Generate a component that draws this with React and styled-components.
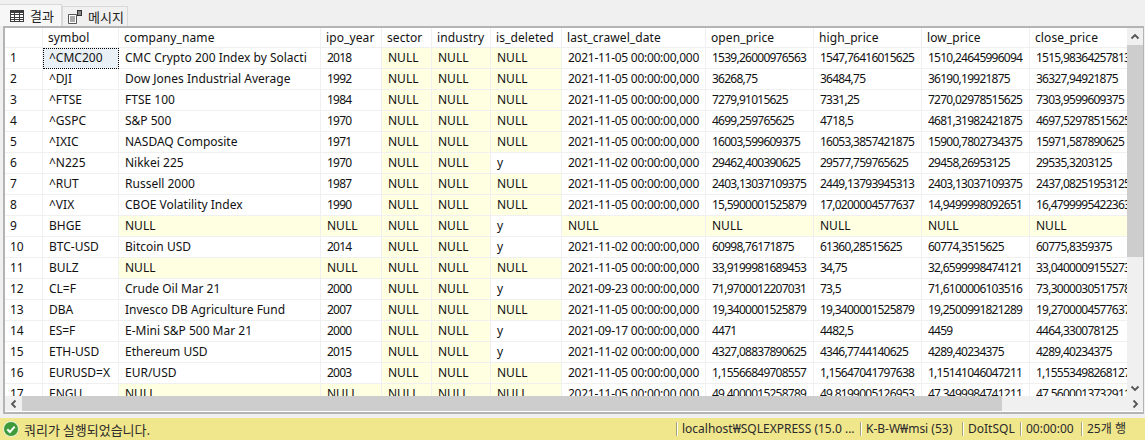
import React from "react";
import styled, { createGlobalStyle } from "styled-components";

const GlobalStyle = createGlobalStyle`
  html, body {
    margin: 0;
    padding: 0;
    background: #f0f0f0;
  }
  body {
    font-family: "Noto Sans", "Noto Sans CJK KR", sans-serif;
    font-size: 12px;
    color: #111;
  }
`;

const Page = styled.div`
  width: 1145px;
  height: 440px;
  display: flex;
  flex-direction: column;
  overflow: hidden;
`;

const TabBar = styled.div`
  height: 26px;
  flex: none;
  display: flex;
  align-items: flex-end;
  box-sizing: border-box;
`;

const Tab = styled.div`
  height: ${(p) => (p.$active ? 22 : 20)}px;
  width: ${(p) => p.$width}px;
  box-sizing: border-box;
  display: flex;
  align-items: center;
  gap: 5px;
  padding-left: ${(p) => (p.$active ? 9 : 4)}px;
  background: ${(p) => (p.$active ? "#f7f7f7" : "#f0f0f0")};
  border: 1px solid #d9d9d9;
  border-left: ${(p) => (p.$active ? "none" : "1px solid #d9d9d9")};
  border-bottom: none;
  font-family: "Noto Sans CJK KR", sans-serif;
  font-size: 13px;
  color: #222;
`;

const Frame = styled.div`
  margin: 0 1px 0 3px;
  height: 388px;
  flex: none;
  box-sizing: border-box;
  border: 2px solid #b4b4b4;
  border-right-width: 1px;
  padding-bottom: 1px;
  background: #fff;
  display: flex;
  flex-direction: column;
`;

const GridRow = styled.div`
  flex: 1;
  min-height: 0;
  display: flex;
`;

const GridClip = styled.div`
  flex: 1;
  min-width: 0;
  overflow: hidden;
`;

const Table = styled.table`
  table-layout: fixed;
  border-collapse: separate;
  border-spacing: 0;
  width: 1133px;
`;

const Head = styled.th`
  height: 20px;
  padding: 0 0 0 5px;
  box-sizing: border-box;
  text-align: left;
  font-weight: 400;
  white-space: nowrap;
  overflow: hidden;
  border-right: 1px solid #f0f0f0;
  border-bottom: 1px solid #f0f0f0;
  letter-spacing: 0.1px;
`;

const spacing = { text: "0", date: "-0.27px", price: "-0.75px" };

const Cell = styled.td`
  height: 21px;
  padding: 0 0 2px ${(p) => (p.$rowHead ? 5 : 6)}px;
  box-sizing: border-box;
  white-space: nowrap;
  overflow: hidden;
  position: relative;
  background: ${(p) => (p.$selected ? "#e9f0f6" : p.$null ? "#ffffe1" : "#ffffff")};
  border-right: 1px solid #f0f0f0;
  border-bottom: 1px solid #f0f0f0;
  outline: ${(p) => (p.$selected ? "1px dotted #000" : "none")};
  outline-offset: -1px;
  letter-spacing: ${(p) => spacing[p.$kind || "text"]};
`;

const VScroll = styled.div`
  width: 16px;
  flex: none;
  background: #f0f0f0;
  display: flex;
  flex-direction: column;
`;

const HScroll = styled.div`
  height: 15px;
  flex: none;
  background: #f0f0f0;
  display: flex;
`;

const Arrow = styled.div`
  width: ${(p) => p.$size}px;
  height: ${(p) => p.$high}px;
  flex: none;
  display: flex;
  align-items: center;
  justify-content: center;
`;

const VThumb = styled.div`
  height: 212px;
  flex: none;
  background: #cdcdcd;
`;

const Spacer = styled.div`
  flex: 1;
`;

const HThumb = styled.div`
  width: 980px;
  flex: none;
  background: #cdcdcd;
`;

const StatusBar = styled.div`
  margin-top: 4px;
  flex: 1;
  background: #f0e68c;
  display: flex;
  align-items: center;
  padding-left: 3px;
  font-size: 12px;
  color: #2a2a2a;
`;

const StatusMessage = styled.div`
  flex: 1;
  display: flex;
  align-items: center;
  gap: 5px;
  font-family: "Noto Sans CJK KR", sans-serif;
  font-size: 13px;
`;

const StatusItem = styled.div`
  width: ${(p) => p.$width}px;
  flex: none;
  box-sizing: border-box;
  height: 14px;
  line-height: 14px;
  border-left: 1px solid #fff;
  box-shadow: -1px 0 0 #a8a27a;
  padding-left: 4px;
  white-space: nowrap;
`;

const columns = [
  ["", 38],
  ["symbol", 76],
  ["company_name", 202],
  ["ipo_year", 61],
  ["sector", 50],
  ["industry", 59],
  ["is_deleted", 71],
  ["last_crawel_date", 144],
  ["open_price", 108],
  ["high_price", 108],
  ["low_price", 108],
  ["close_price", 108],
];

const N = "NULL";
const nov5 = "2021-11-05 00:00:00,000";
const nov2 = "2021-11-02 00:00:00,000";

const rows = [
  ["^CMC200", "CMC Crypto 200 Index by Solacti", "2018", N, N, N, nov5, "1539,26000976563", "1547,76416015625", "1510,24645996094", "1515,98364257813"],
  ["^DJI", "Dow Jones Industrial Average", "1992", N, N, N, nov5, "36268,75", "36484,75", "36190,19921875", "36327,94921875"],
  ["^FTSE", "FTSE 100", "1984", N, N, N, nov5, "7279,91015625", "7331,25", "7270,02978515625", "7303,9599609375"],
  ["^GSPC", "S&P 500", "1970", N, N, N, nov5, "4699,259765625", "4718,5", "4681,31982421875", "4697,52978515625"],
  ["^IXIC", "NASDAQ Composite", "1971", N, N, N, nov5, "16003,599609375", "16053,3857421875", "15900,7802734375", "15971,587890625"],
  ["^N225", "Nikkei 225", "1970", N, N, "y", nov2, "29462,400390625", "29577,759765625", "29458,26953125", "29535,3203125"],
  ["^RUT", "Russell 2000", "1987", N, N, N, nov5, "2403,13037109375", "2449,13793945313", "2403,13037109375", "2437,08251953125"],
  ["^VIX", "CBOE Volatility Index", "1990", N, N, N, nov5, "15,5900001525879", "17,0200004577637", "14,9499998092651", "16,4799995422363"],
  ["BHGE", N, N, N, N, "y", N, N, N, N, N],
  ["BTC-USD", "Bitcoin USD", "2014", N, N, "y", nov2, "60998,76171875", "61360,28515625", "60774,3515625", "60775,8359375"],
  ["BULZ", N, N, N, N, N, nov5, "33,9199981689453", "34,75", "32,6599998474121", "33,0400009155273"],
  ["CL=F", "Crude Oil Mar 21", "2000", N, N, "y", "2021-09-23 00:00:00,000", "71,9700012207031", "73,5", "71,6100006103516", "73,3000030517578"],
  ["DBA", "Invesco DB Agriculture Fund", "2007", N, N, N, nov5, "19,3400001525879", "19,3400001525879", "19,2500991821289", "19,2700004577637"],
  ["ES=F", "E-Mini S&P 500 Mar 21", "2000", N, N, "y", "2021-09-17 00:00:00,000", "4471", "4482,5", "4459", "4464,330078125"],
  ["ETH-USD", "Ethereum USD", "2015", N, N, "y", nov2, "4327,08837890625", "4346,7744140625", "4289,40234375", "4289,40234375"],
  ["EURUSD=X", "EUR/USD", "2003", N, N, N, nov5, "1,15566849708557", "1,15647041797638", "1,15141046047211", "1,15553498268127"],
  ["ENGU", N, N, N, N, N, nov5, "49,4000015258789", "49,8199005126953", "47,3499984741211", "47,5600013732911"],
];

const kindOf = (value, c) => {
  if (value === N || value === "y" || c < 2) return "text";
  return c === 6 ? "date" : "price";
};

const GridIcon = () => (
  <svg width="16" height="16" viewBox="0 0 16 16">
    <rect x="1.500" y="2.500" width="13" height="11" fill="#fff" stroke="#3c3c3c" />
    <path d="M1 6.500h14M1 9.500h14M1 11.500h14M5.500 2v12M10.500 2v12" stroke="#3c3c3c" fill="none" />
    <rect x="1" y="2" width="14" height="3" fill="#3c3c3c" />
  </svg>
);

const MessageIcon = () => (
  <svg width="16" height="16" viewBox="0 0 16 16">
    <path d="M1.500 5.500h8v9h-8z" fill="#fff" stroke="#555" />
    <path d="M3 8h5M3 10h5M3 12h5" stroke="#555" fill="none" />
    <rect x="10" y="1" width="5" height="6" fill="#333" />
    <path d="M11 3h3M11 5h3" stroke="#ddd" fill="none" />
  </svg>
);

const CheckIcon = () => (
  <svg width="16" height="16" viewBox="0 0 16 16">
    <circle cx="8" cy="8" r="7.500" fill="#3f9a3a" stroke="#e8f3df" strokeWidth="1" />
    <path d="M4.300 8.300l2.600 2.700 4.800-5.400" fill="none" stroke="#fff" strokeWidth="2" />
  </svg>
);

const Chevron = ({ d }) => (
  <svg width="10" height="10" viewBox="0 0 10 10">
    <path d={d} fill="none" stroke="#555" strokeWidth="1.800" />
  </svg>
);

const App = () => {
  return (
    <Page>
      <GlobalStyle />
      <TabBar>
        <Tab $active $width={62}>
          <GridIcon />
          결과
        </Tab>
        <Tab $width={66}>
          <MessageIcon />
          메시지
        </Tab>
      </TabBar>
      <Frame>
        <GridRow>
          <GridClip>
            <Table>
              <colgroup>
                {columns.map(([name, width]) => (
                  <col key={name} width={width} />
                ))}
              </colgroup>
              <thead>
                <tr>
                  {columns.map(([name]) => (
                    <Head key={name}>{name}</Head>
                  ))}
                </tr>
              </thead>
              <tbody>
                {rows.map((row, i) => (
                  <tr key={row[0]}>
                    <Cell $rowHead>{i + 1}</Cell>
                    {row.map((value, c) => (
                      <Cell
                        key={c}
                        $null={value === N}
                        $kind={kindOf(value, c)}
                        $selected={i === 0 && c === 0}
                      >
                        {value}
                      </Cell>
                    ))}
                  </tr>
                ))}
              </tbody>
            </Table>
          </GridClip>
          <VScroll>
            <Arrow $size={16} $high={17}>
              <Chevron d="M1.500 6.500L5 3l3.500 3.500" />
            </Arrow>
            <VThumb />
            <Spacer />
            <Arrow $size={16} $high={17}>
              <Chevron d="M1.500 3.500L5 7l3.500-3.500" />
            </Arrow>
          </VScroll>
        </GridRow>
        <HScroll>
          <Arrow $size={17} $high={15}>
            <Chevron d="M6.500 1.500L3 5l3.500 3.500" />
          </Arrow>
          <HThumb />
          <Spacer />
          <Arrow $size={17} $high={15}>
            <Chevron d="M3.500 1.500L7 5l-3.500 3.500" />
          </Arrow>
        </HScroll>
      </Frame>
      <StatusBar>
        <StatusMessage>
          <CheckIcon />
          쿼리가 실행되었습니다.
        </StatusMessage>
        <StatusItem $width={184}>localhost₩SQLEXPRESS (15.0 ...</StatusItem>
        <StatusItem $width={102}>K-B-W₩msi (53)</StatusItem>
        <StatusItem $width={58}>DoItSQL</StatusItem>
        <StatusItem $width={61}>00:00:00</StatusItem>
        <StatusItem $width={63}>25개 행</StatusItem>
      </StatusBar>
    </Page>
  );
};

export default App;
